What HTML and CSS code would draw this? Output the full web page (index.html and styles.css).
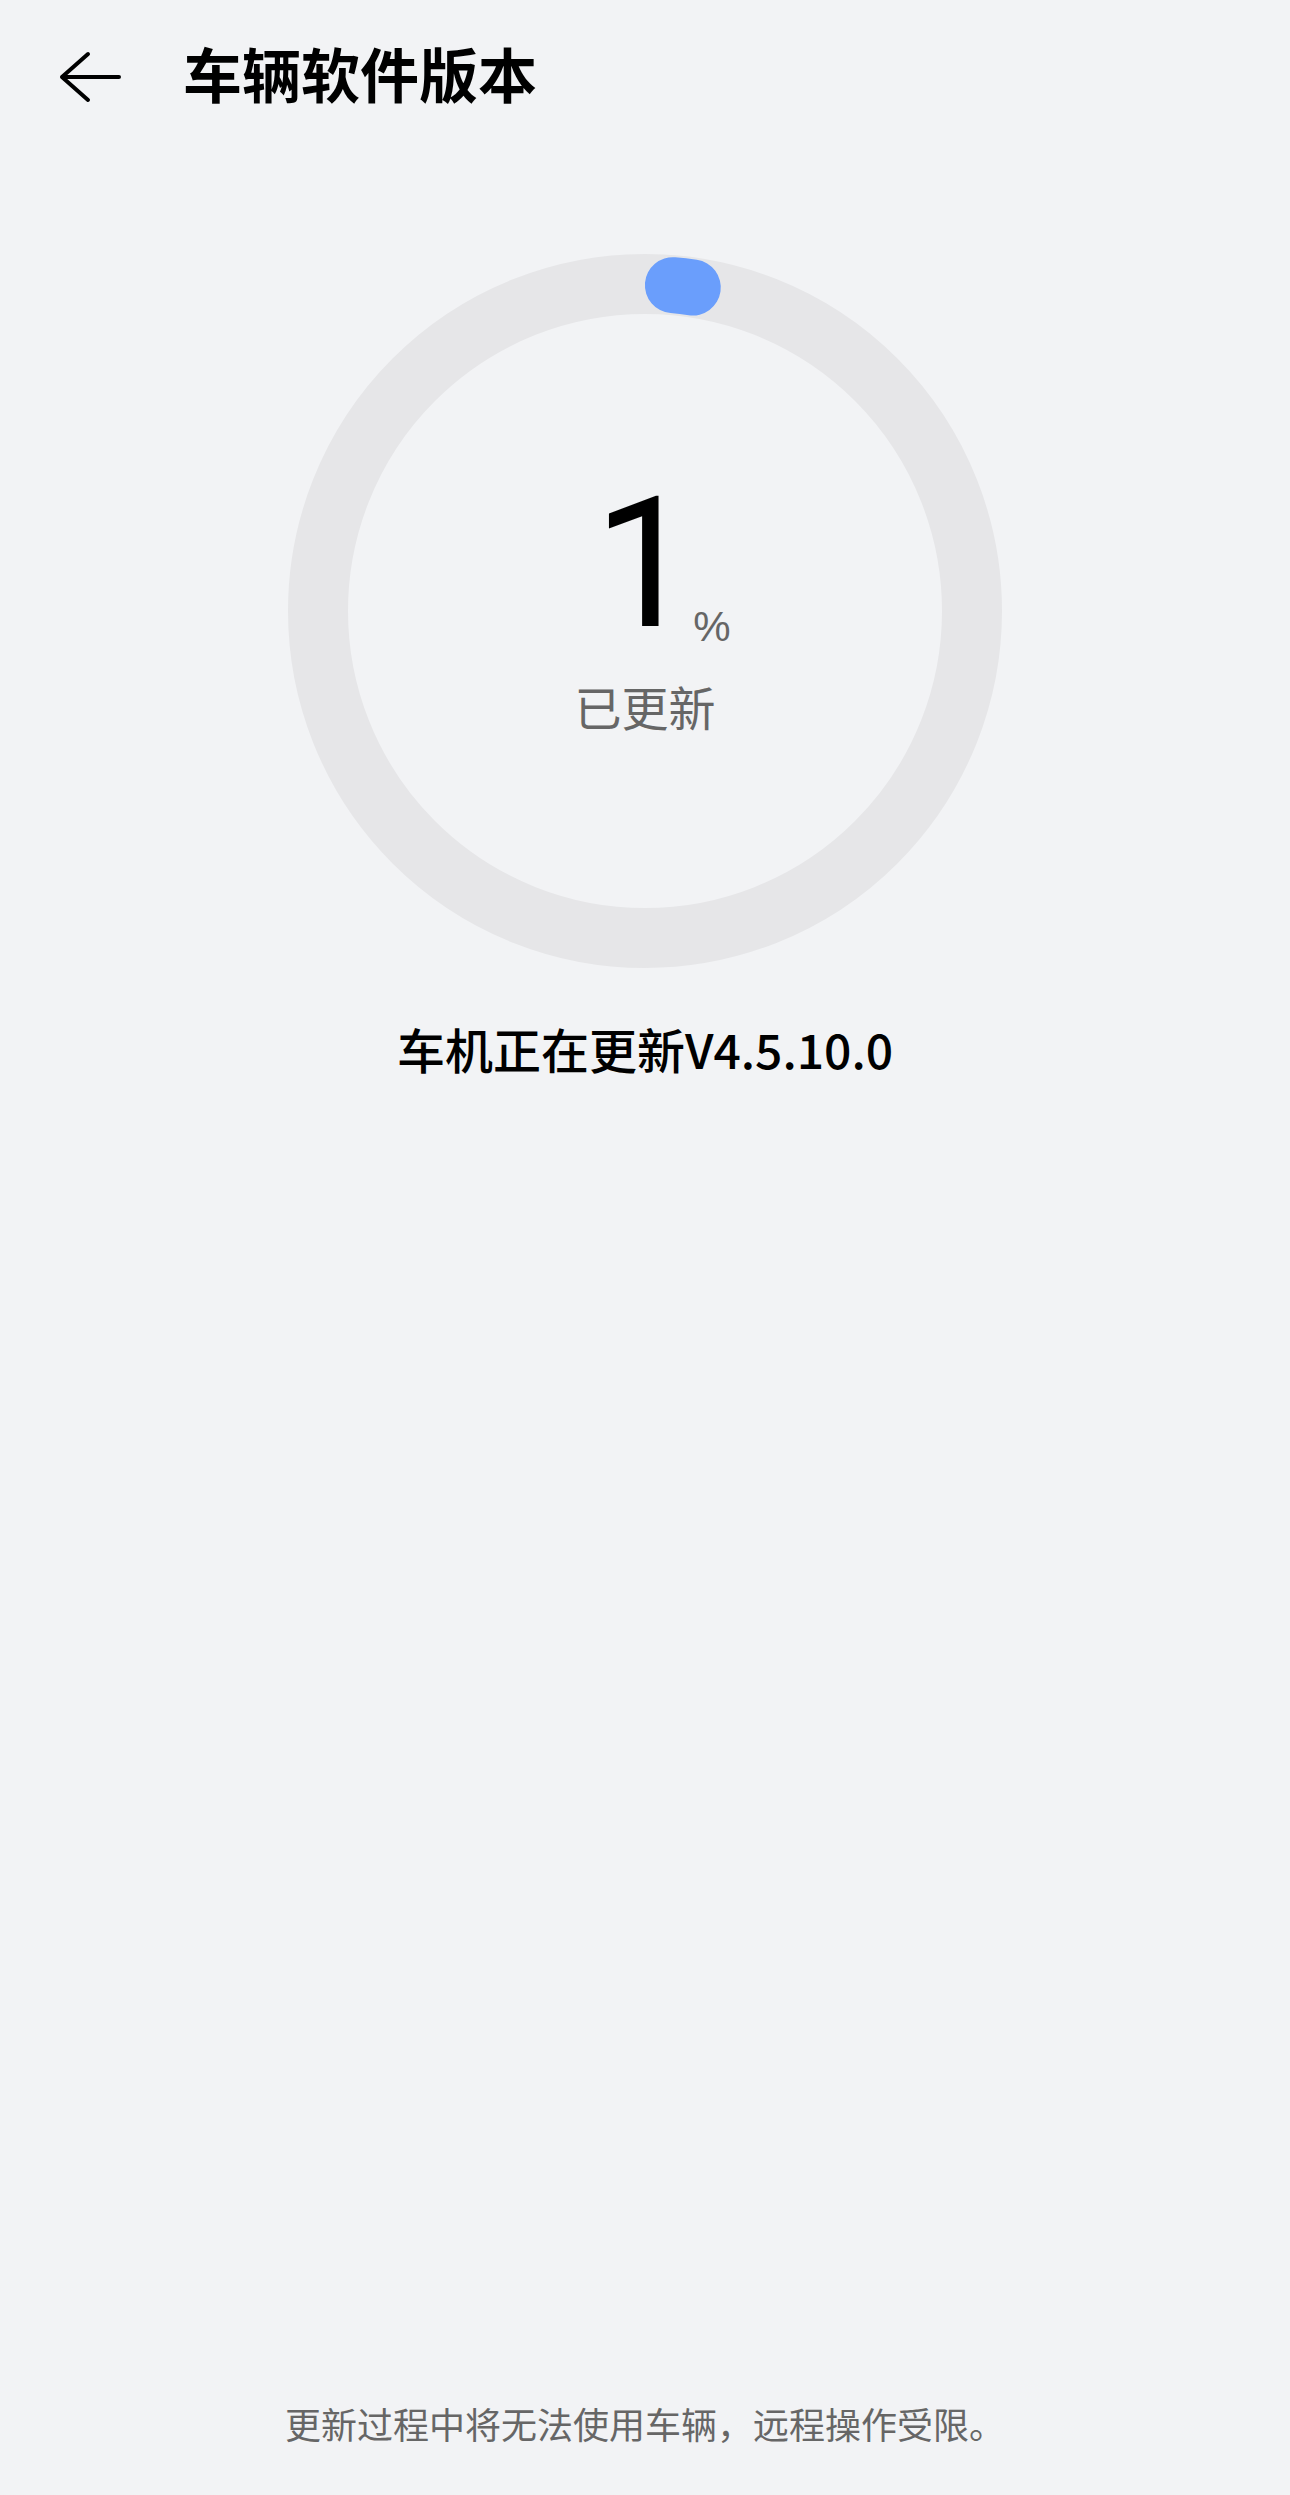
FILE: index.html
```html
<!DOCTYPE html>
<html>
<head>
	<meta charset="utf-8">
	<title>车辆软件版本</title>
	<link rel="stylesheet" href="styles.css">
</head>
<body>
	<div class="page">
		<div class="header">
			<svg class="back" width="64" height="56" viewBox="0 0 64 56">
				<path d="M4 30 H61 M4 30 L30 7 M4 30 L30 53" fill="none" stroke="#000" stroke-width="4" stroke-linecap="round" stroke-linejoin="round"/>
			</svg>
			<div class="title">车辆软件版本</div>
		</div>

		<div class="ring">
			<svg class="ring-svg" width="720" height="720" viewBox="0 0 720 720">
				<circle cx="360" cy="360" r="327" fill="none" stroke="#e6e6e8" stroke-width="60"/>
				<path d="M387.9 34.2 A327 327 0 0 1 407.8 36.5" fill="none" stroke="#6a9efc" stroke-width="56" stroke-linecap="round"/>
			</svg>
			<div class="ring-center">
				<div class="num-wrap">
					<span class="num">1</span><span class="unit">%</span>
				</div>
				<div class="done">已更新</div>
			</div>
		</div>

		<div class="status">车机正在更新V4.5.10.0</div>

		<div class="note">更新过程中将无法使用车辆，远程操作受限。</div>
	</div>
</body>
</html>
```

FILE: styles.css
```css
body{
	margin: 0;
	padding: 0;
	background: #f2f3f5;
	font-family: "Noto Sans CJK SC", "Noto Sans", sans-serif;
}
.page{
	width: 1290px;
	min-height: 2495px;
	display: flex;
	flex-direction: column;
	align-items: center;
}
.header{
	align-self: stretch;
	height: 146px;
	display: flex;
	align-items: center;
	padding-left: 58px;
	gap: 61px;
}
.back{
	display: block;
	margin-top: 4px;
}
.title{
	font-size: 59px;
	line-height: 80px;
	font-weight: 700;
	color: #000;
}
.ring{
	margin-top: 105px;
	width: 720px;
	height: 720px;
	display: grid;
}
.ring-svg,
.ring-center{
	grid-area: 1 / 1;
}
.ring-svg{
	display: block;
}
.ring-center{
	display: flex;
	flex-direction: column;
	align-items: center;
	padding-top: 222px;
}
.num-wrap{
	position: relative;
}
.num{
	display: block;
	font-family: Roboto, sans-serif;
	font-size: 182px;
	line-height: 182px;
	color: #000;
}
.unit{
	position: absolute;
	left: 100%;
	bottom: 7px;
	margin-left: -3px;
	font-family: "Liberation Sans", Arial, sans-serif;
	font-size: 42px;
	line-height: 1;
	color: #666;
}
.done{
	margin-top: 21px;
	font-size: 47px;
	line-height: 60px;
	color: #666;
}
.status{
	margin-top: 45px;
	font-size: 48px;
	line-height: 64px;
	font-weight: 500;
	color: #000;
}
.note{
	margin-top: auto;
	padding-bottom: 47px;
	font-size: 36px;
	line-height: 50px;
	color: #666;
}
```
